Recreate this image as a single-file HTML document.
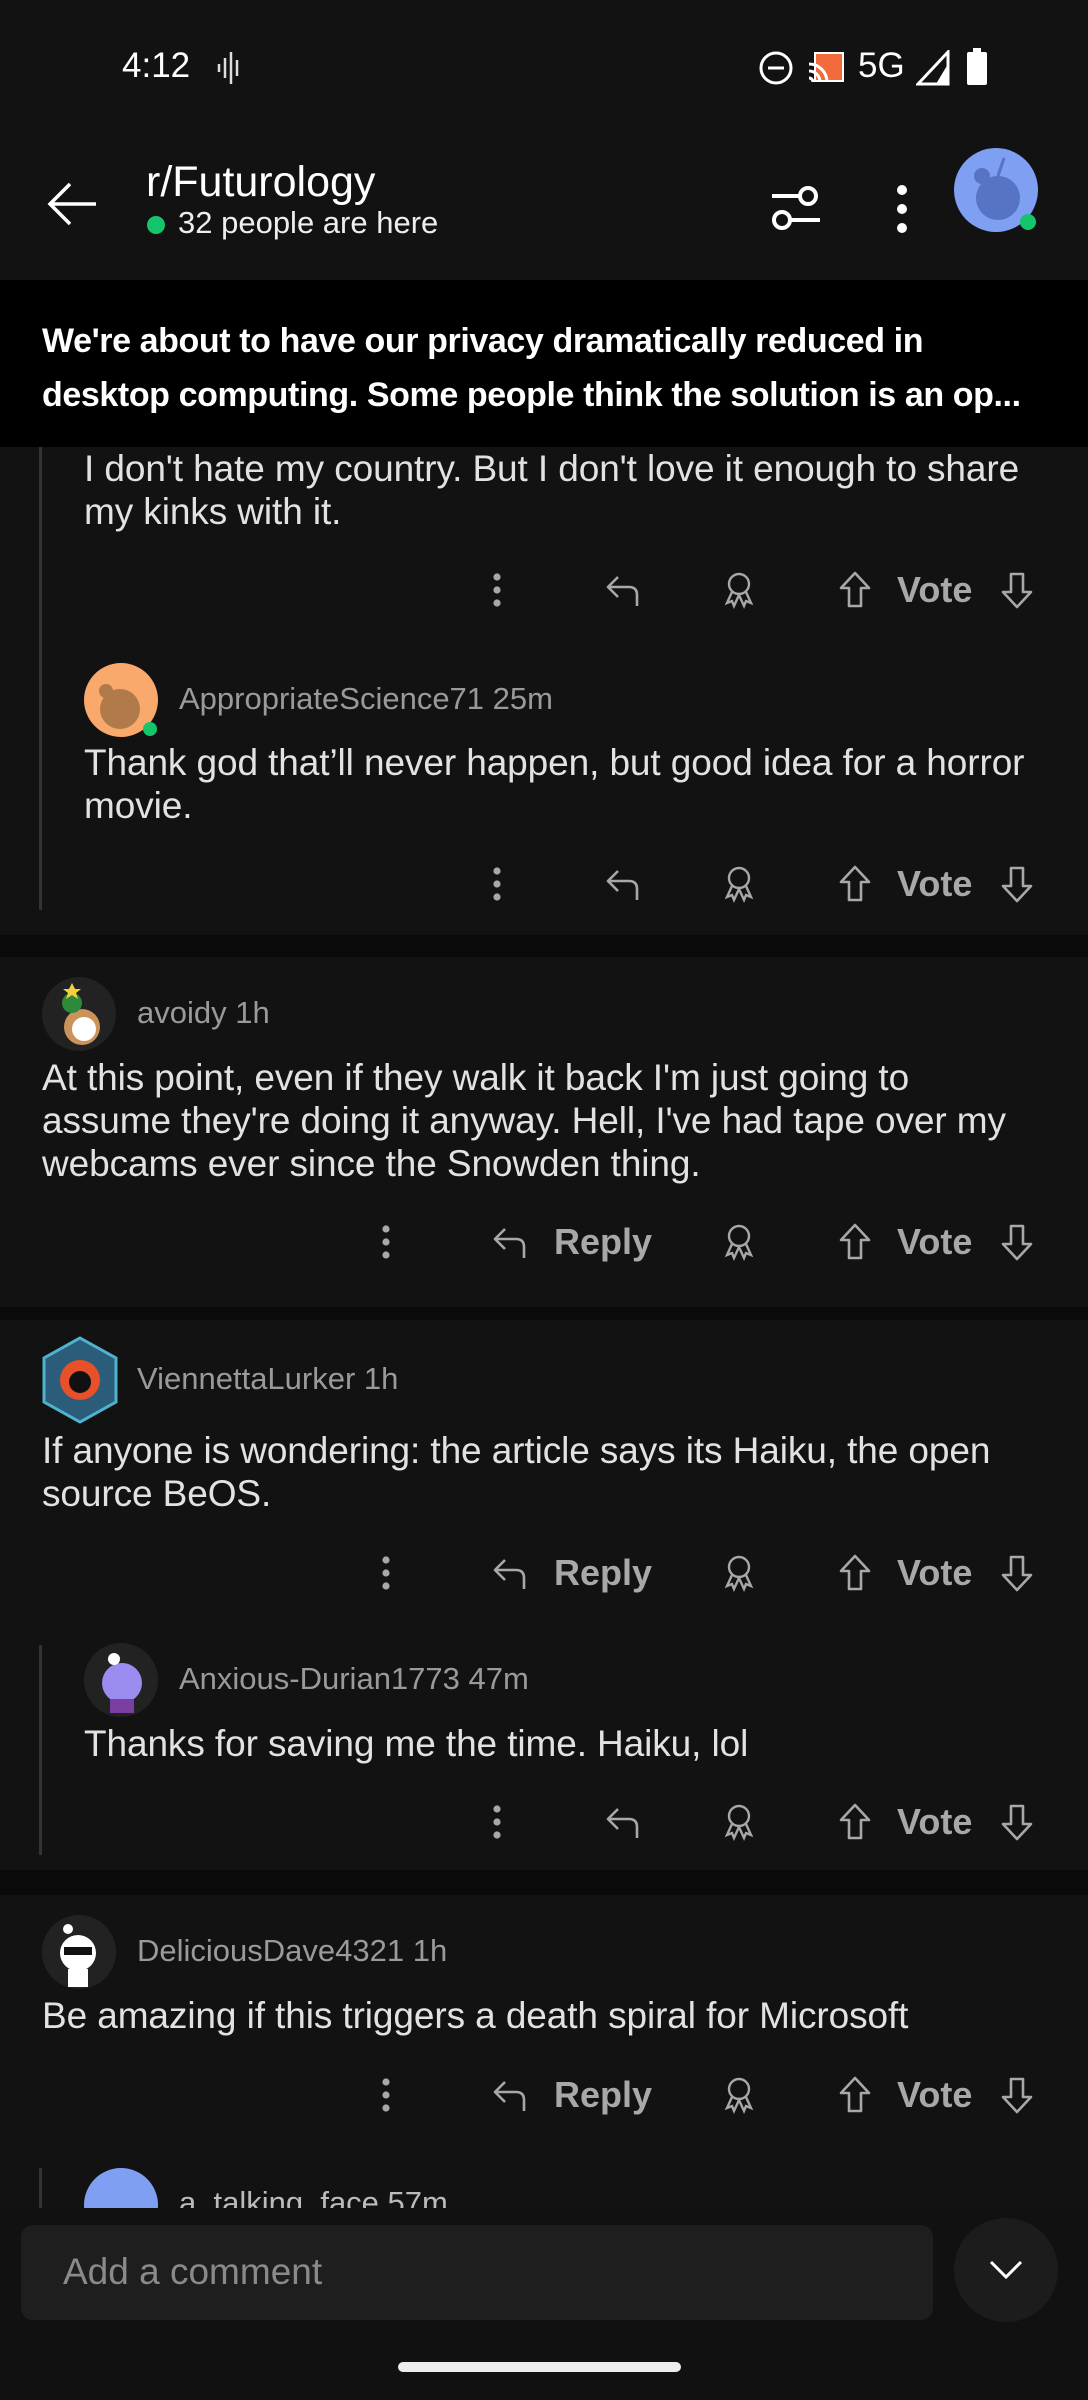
<!DOCTYPE html>
<html><head><meta charset="utf-8"><style>
*{margin:0;padding:0;box-sizing:border-box}
body{width:1088px;height:2400px;background:#0a0a0a;font-family:"Liberation Sans",sans-serif;position:relative;overflow:hidden;color:#e6e6e6}
.abs{position:absolute}
.t{position:absolute;white-space:nowrap}
.card{position:absolute;left:0;width:1088px;background:#121212}
.body{font-size:37px;letter-spacing:-0.1px;color:#e2e2e2;line-height:43px}
.name{font-size:31px;color:#9a9a9a;letter-spacing:0}
.act{font-size:36px;color:#a8a8a8;font-weight:bold;letter-spacing:0}
.ic{position:absolute;width:40px;height:40px}
.line{position:absolute;left:39px;width:3px;background:#333}
</style></head><body>
<div class="abs" style="left:0;top:0;width:1088px;height:280px;background:#121212"></div>
<div class="t" style="left:122px;top:46px;font-size:35px;color:#fff">4:12</div>
<svg class="abs" style="left:216px;top:52px" width="28" height="32" viewBox="0 0 28 32"><g stroke="#ddd" stroke-width="2.5"><line x1="3" y1="12" x2="3" y2="20"/><line x1="9" y1="6" x2="9" y2="26"/><line x1="15" y1="0" x2="15" y2="32"/><line x1="21" y1="8" x2="21" y2="24"/></g></svg>
<svg class="abs" style="left:758px;top:50px" width="36" height="36"><circle cx="18" cy="18" r="15" fill="none" stroke="#fff" stroke-width="3"/><line x1="10" y1="18" x2="26" y2="18" stroke="#fff" stroke-width="3"/></svg>
<svg class="abs" style="left:806px;top:50px" width="40" height="36"><rect x="9" y="3" width="28" height="28" fill="#f26b3a" stroke="#fff" stroke-width="2"/><path d="M3 14a18 18 0 0 1 18 18M3 21a11 11 0 0 1 11 11M3 28a4 4 0 0 1 4 4" stroke="#fff" stroke-width="3" fill="none"/></svg>
<div class="t" style="left:858px;top:46px;font-size:35px;color:#fff">5G</div>
<svg class="abs" style="left:916px;top:50px" width="34" height="36"><path d="M32 2V34H2Z" fill="none" stroke="#fff" stroke-width="3"/><path d="M32 14V34H20Z" fill="#fff"/></svg>
<svg class="abs" style="left:966px;top:48px" width="22" height="38"><rect x="7" y="0" width="8" height="4" fill="#fff"/><rect x="1" y="4" width="20" height="33" rx="2" fill="#fff"/></svg>
<svg class="abs" style="left:46px;top:180px" width="52" height="48"><path d="M24 4L4 24L24 44M4 24H50" stroke="#fff" stroke-width="3.5" fill="none"/></svg>
<div class="t" style="left:146px;top:158px;font-size:43px;color:#fff;letter-spacing:0">r/Futurology</div>
<div class="abs" style="left:147px;top:216px;width:18px;height:18px;border-radius:50%;background:#15c46b"></div>
<div class="t" style="left:178px;top:205px;font-size:31px;color:#eee;letter-spacing:0">32 people are here</div>
<svg class="abs" style="left:770px;top:182px" width="52" height="52"><g stroke="#fff" stroke-width="4" fill="none"><circle cx="38" cy="14" r="8"/><line x1="2" y1="14" x2="30" y2="14"/><circle cx="12" cy="38" r="8"/><line x1="20" y1="38" x2="50" y2="38"/></g></svg>
<svg class="abs" style="left:892px;top:182px" width="20" height="54"><circle cx="10" cy="8" r="5" fill="#fff"/><circle cx="10" cy="27" r="5" fill="#fff"/><circle cx="10" cy="46" r="5" fill="#fff"/></svg>
<svg class="abs" style="left:952px;top:146px" width="90" height="90"><circle cx="44" cy="44" r="42" fill="#7e9ff2"/><circle cx="46" cy="52" r="22" fill="#5673c4"/><circle cx="30" cy="30" r="8" fill="#5673c4"/><path d="M46 30L52 12" stroke="#5673c4" stroke-width="3"/><circle cx="76" cy="76" r="8" fill="#15c46b"/></svg>
<div class="abs" style="left:0;top:280px;width:1088px;height:167px;background:#000"></div>
<div class="t" style="left:42px;top:314px;font-size:34px;font-weight:bold;color:#fff;letter-spacing:-0.4px;line-height:54px">We're about to have our privacy dramatically reduced in<br>desktop computing. Some people think the solution is an op...</div>

<div class="card" style="top:447px;height:488px"></div>
<div class="line" style="top:447px;height:463px"></div>
<div class="t body" style="left:84px;top:447px">I don't hate my country. But I don't love it enough to share<br>my kinks with it.</div>
<div class="abs" style="left:84px;top:663px;width:74px;height:74px;border-radius:50%;background:#f9a96b"></div>
<svg class="abs" style="left:84px;top:663px" width="80" height="80"><circle cx="36" cy="46" r="20" fill="#b07a4a"/><circle cx="22" cy="28" r="7" fill="#b07a4a"/><circle cx="66" cy="66" r="7" fill="#15c46b"/></svg>
<div class="t name" style="left:179px;top:681px">AppropriateScience71 25m</div>
<div class="t body" style="left:84px;top:741px">Thank god that’ll never happen, but good idea for a horror<br>movie.</div>

<div class="card" style="top:957px;height:350px"></div>
<div class="abs" style="left:42px;top:977px;width:74px;height:74px;border-radius:50%;background:#222"></div>
<svg class="abs" style="left:42px;top:977px" width="74" height="74"><circle cx="40" cy="50" r="18" fill="#c9935a"/><circle cx="42" cy="52" r="12" fill="#fff"/><circle cx="30" cy="26" r="10" fill="#2c8a3a"/><path d="M30 6l3 6 6 0-5 4 2 6-6-4-6 4 2-6-5-4 6 0z" fill="#f4d03f"/></svg>
<div class="t name" style="left:137px;top:995px">avoidy 1h</div>
<div class="t body" style="left:42px;top:1056px">At this point, even if they walk it back I'm just going to<br>assume they're doing it anyway. Hell, I've had tape over my<br>webcams ever since the Snowden thing.</div>

<div class="card" style="top:1320px;height:550px"></div>
<svg class="abs" style="left:40px;top:1336px" width="80" height="88"><path d="M40 2L76 22V66L40 86L4 66V22Z" fill="#2b5d7a" stroke="#4fb3d0" stroke-width="3"/><circle cx="40" cy="44" r="20" fill="#e8502a"/><circle cx="40" cy="46" r="11" fill="#111"/></svg>
<div class="t name" style="left:137px;top:1361px">ViennettaLurker 1h</div>
<div class="t body" style="left:42px;top:1429px">If anyone is wondering: the article says its Haiku, the open<br>source BeOS.</div>
<div class="line" style="top:1645px;height:210px"></div>
<div class="abs" style="left:84px;top:1643px;width:74px;height:74px;border-radius:50%;background:#222"></div>
<svg class="abs" style="left:84px;top:1643px" width="74" height="74"><circle cx="38" cy="40" r="20" fill="#9b8df0"/><rect x="26" y="56" width="24" height="14" fill="#7a3fa0"/><circle cx="30" cy="16" r="6" fill="#fff"/></svg>
<div class="t name" style="left:179px;top:1661px">Anxious-Durian1773 47m</div>
<div class="t body" style="left:84px;top:1722px">Thanks for saving me the time. Haiku, lol</div>

<div class="card" style="top:1895px;height:313px"></div>
<div class="abs" style="left:42px;top:1915px;width:74px;height:74px;border-radius:50%;background:#222"></div>
<svg class="abs" style="left:42px;top:1915px" width="74" height="74"><circle cx="36" cy="38" r="18" fill="#fff"/><rect x="22" y="32" width="28" height="8" fill="#111"/><rect x="26" y="54" width="20" height="18" fill="#fff"/><circle cx="26" cy="14" r="5" fill="#fff"/></svg>
<div class="t name" style="left:137px;top:1933px">DeliciousDave4321 1h</div>
<div class="t body" style="left:42px;top:1994px">Be amazing if this triggers a death spiral for Microsoft</div>
<div class="line" style="top:2168px;height:40px"></div>
<div class="abs" style="left:84px;top:2168px;width:74px;height:74px;border-radius:50%;background:#7e9ff2;clip-path:inset(0 0 34px 0)"></div>
<div class="t name" style="left:179px;top:2185px;color:#bbb">a_talking_face 57m</div>

<svg width="0" height="0" style="position:absolute"><defs>
<g id="dots"><circle cx="20" cy="7" r="3.6" fill="#a8a8a8"/><circle cx="20" cy="20" r="3.6" fill="#a8a8a8"/><circle cx="20" cy="33" r="3.6" fill="#a8a8a8"/></g>
<path id="rep" d="M15 7L5 17L15 27M5 17H26Q34 17 34 25V36" fill="none" stroke="#a8a8a8" stroke-width="2.6" stroke-linejoin="round"/>
<g id="aw" fill="none" stroke="#a8a8a8" stroke-width="2.4"><circle cx="20" cy="14" r="10"/><path d="M13 22L8 33L13 31L15 36L20 25L25 36L27 31L32 33L27 22"/></g>
<path id="up" d="M20 3L6 18H14V36H26V18H34Z" fill="none" stroke="#a8a8a8" stroke-width="2.6" stroke-linejoin="round"/>
<path id="dn" d="M20 37L6 22H14V4H26V22H34Z" fill="none" stroke="#a8a8a8" stroke-width="2.6" stroke-linejoin="round"/>
</defs></svg>

<div class="abs" style="left:0;top:570px">
<svg class="ic" style="left:477px"><use href="#dots"/></svg><svg class="ic" style="left:603px"><use href="#rep"/></svg><svg class="ic" style="left:719px"><use href="#aw"/></svg><svg class="ic" style="left:835px"><use href="#up"/></svg><div class="t act" style="left:897px;top:-1px">Vote</div><svg class="ic" style="left:997px"><use href="#dn"/></svg></div>
<div class="abs" style="left:0;top:864px">
<svg class="ic" style="left:477px"><use href="#dots"/></svg><svg class="ic" style="left:603px"><use href="#rep"/></svg><svg class="ic" style="left:719px"><use href="#aw"/></svg><svg class="ic" style="left:835px"><use href="#up"/></svg><div class="t act" style="left:897px;top:-1px">Vote</div><svg class="ic" style="left:997px"><use href="#dn"/></svg></div>
<div class="abs" style="left:0;top:1222px">
<svg class="ic" style="left:366px"><use href="#dots"/></svg><svg class="ic" style="left:490px"><use href="#rep"/></svg><div class="t act" style="left:554px;top:-1px">Reply</div><svg class="ic" style="left:719px"><use href="#aw"/></svg><svg class="ic" style="left:835px"><use href="#up"/></svg><div class="t act" style="left:897px;top:-1px">Vote</div><svg class="ic" style="left:997px"><use href="#dn"/></svg></div>
<div class="abs" style="left:0;top:1553px">
<svg class="ic" style="left:366px"><use href="#dots"/></svg><svg class="ic" style="left:490px"><use href="#rep"/></svg><div class="t act" style="left:554px;top:-1px">Reply</div><svg class="ic" style="left:719px"><use href="#aw"/></svg><svg class="ic" style="left:835px"><use href="#up"/></svg><div class="t act" style="left:897px;top:-1px">Vote</div><svg class="ic" style="left:997px"><use href="#dn"/></svg></div>
<div class="abs" style="left:0;top:1802px">
<svg class="ic" style="left:477px"><use href="#dots"/></svg><svg class="ic" style="left:603px"><use href="#rep"/></svg><svg class="ic" style="left:719px"><use href="#aw"/></svg><svg class="ic" style="left:835px"><use href="#up"/></svg><div class="t act" style="left:897px;top:-1px">Vote</div><svg class="ic" style="left:997px"><use href="#dn"/></svg></div>
<div class="abs" style="left:0;top:2075px">
<svg class="ic" style="left:366px"><use href="#dots"/></svg><svg class="ic" style="left:490px"><use href="#rep"/></svg><div class="t act" style="left:554px;top:-1px">Reply</div><svg class="ic" style="left:719px"><use href="#aw"/></svg><svg class="ic" style="left:835px"><use href="#up"/></svg><div class="t act" style="left:897px;top:-1px">Vote</div><svg class="ic" style="left:997px"><use href="#dn"/></svg></div>

<div class="abs" style="left:0;top:2208px;width:1088px;height:192px;background:#111"></div>
<div class="abs" style="left:21px;top:2225px;width:912px;height:95px;border-radius:12px;background:#1e1e1e"></div>
<div class="t" style="left:63px;top:2251px;font-size:37px;color:#8a8a8a;letter-spacing:0">Add a comment</div>
<div class="abs" style="left:954px;top:2218px;width:104px;height:104px;border-radius:50%;background:#1c1c1c"></div>
<svg class="abs" style="left:988px;top:2258px" width="36" height="24"><path d="M3 4L18 19L33 4" fill="none" stroke="#fff" stroke-width="3"/></svg>
<div class="abs" style="left:398px;top:2362px;width:283px;height:10px;border-radius:5px;background:#eee"></div>
</body></html>
